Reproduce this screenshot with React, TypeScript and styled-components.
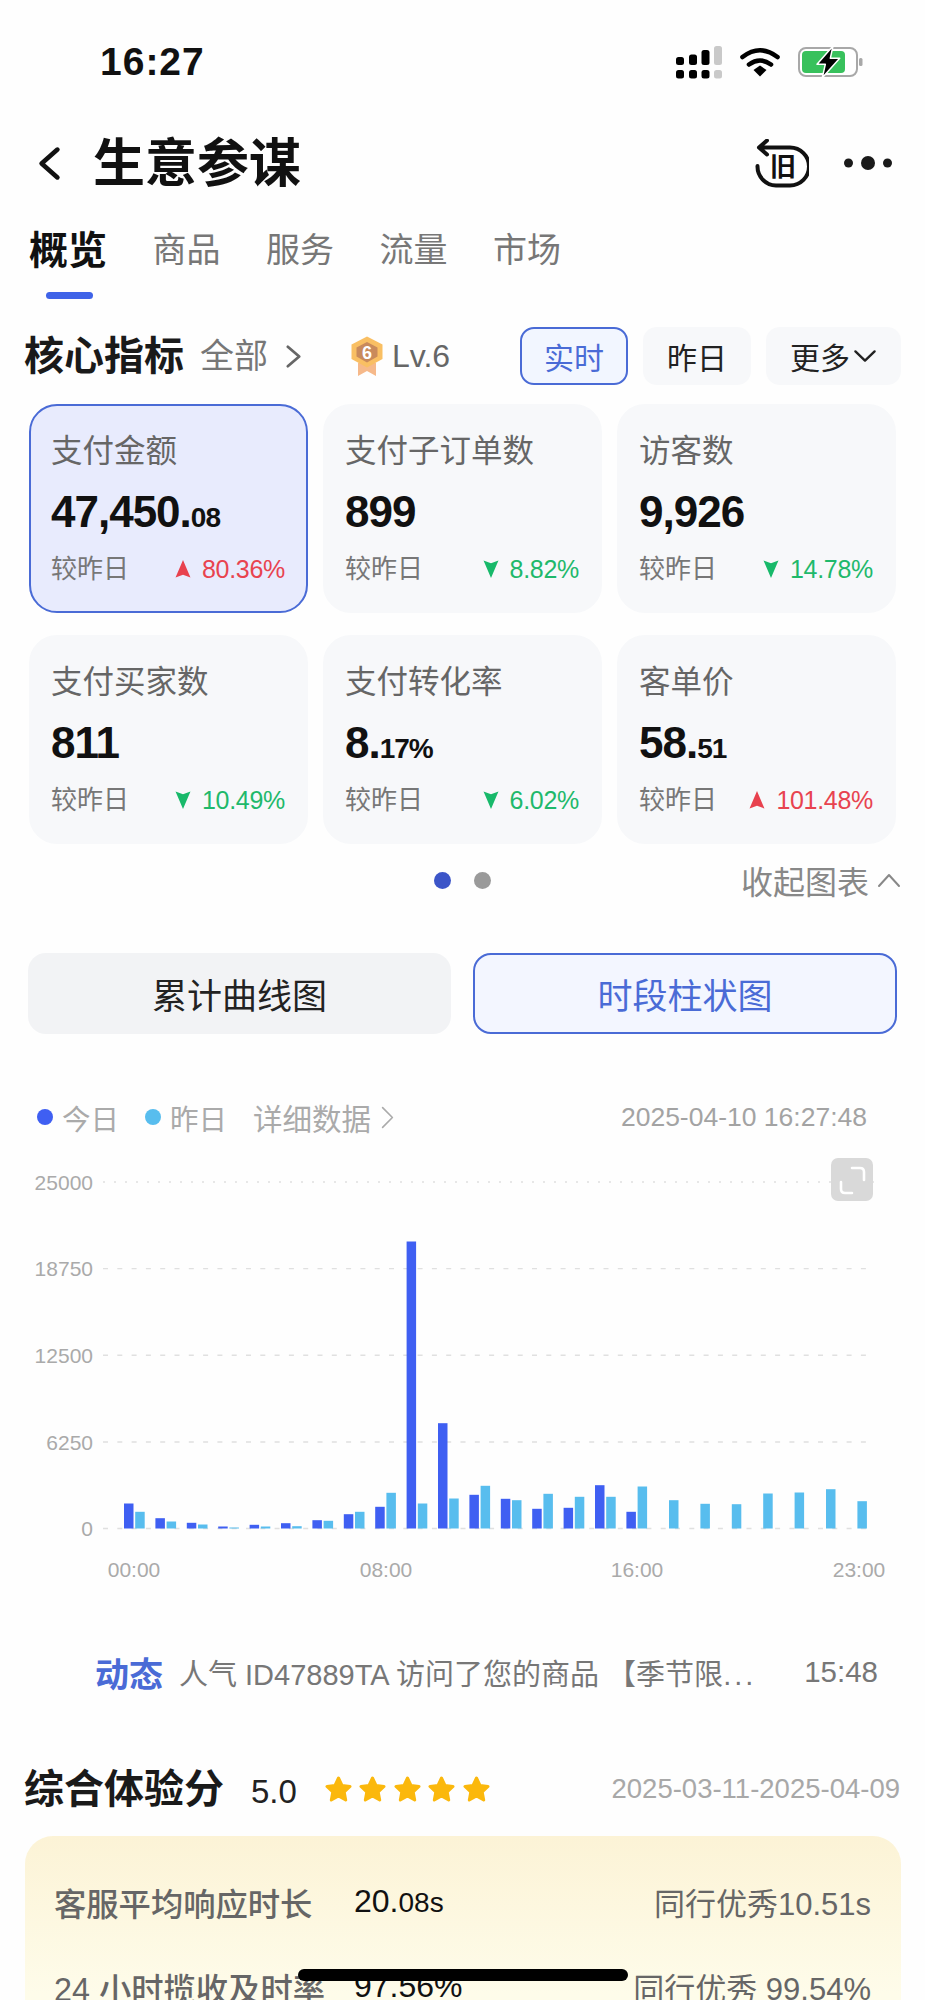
import styled, { createGlobalStyle } from 'styled-components';

const BLUE = '#3f5ff2';
const SKY = '#58bdee';

const metrics = [
	{ title: '支付金额', main: '47,450.', small: '08', trend: 'up', rate: '80.36%', active: true },
	{ title: '支付子订单数', main: '899', small: '', trend: 'down', rate: '8.82%' },
	{ title: '访客数', main: '9,926', small: '', trend: 'down', rate: '14.78%' },
	{ title: '支付买家数', main: '811', small: '', trend: 'down', rate: '10.49%' },
	{ title: '支付转化率', main: '8.', small: '17%', trend: 'down', rate: '6.02%' },
	{ title: '客单价', main: '58.', small: '51', trend: 'up', rate: '101.48%' },
];

const today = [25, 10.3, 5.7, 2, 3.7, 5.3, 8.3, 14.3, 21.7, 287, 105.3, 33.7, 29.7, 19.7, 20.7, 43.3, 16.7];
const yesterday = [
	16.7, 7, 4, 1, 2, 2.3, 7.7, 16.7, 35.7, 25, 30, 42.7, 28.3, 34.7, 31.7, 31.7, 42, 28.3, 24.7, 24.3, 35, 36,
	39.3, 27.3,
];
const gridLines = [
	{ y: 43, label: '25000', dash: '2 9' },
	{ y: 129.6, label: '18750', dash: '5 9.3' },
	{ y: 216.3, label: '12500', dash: '5 9.3' },
	{ y: 303, label: '6250', dash: '5 9.3' },
	{ y: 389.5, label: '0', dash: '5 9.3' },
];
const hours = [
	{ x: 134, label: '00:00' },
	{ x: 386, label: '08:00' },
	{ x: 637, label: '16:00' },
	{ x: 859, label: '23:00' },
];

function Triangle({ trend }: { trend: string }) {
	const color = trend === 'up' ? '#e8414e' : '#18b96a';
	return (
		<TrendIcon viewBox="0 0 15 18" width={16} height={20}>
			{trend === 'up' ? (
				<path d="M7.5 0.5 L14.5 17 L7.5 14.5 L0.5 17 Z" fill={color} />
			) : (
				<path d="M0.5 1 L7.5 3.5 L14.5 1 L7.5 17.5 Z" fill={color} />
			)}
		</TrendIcon>
	);
}

function Chevron({ w, h, sw, color, dir }: { w: number; h: number; sw: number; color: string; dir: string }) {
	const points = {
		left: `${w - sw} ${sw} ${sw} ${h / 2} ${w - sw} ${h - sw}`,
		right: `${sw} ${sw} ${w - sw} ${h / 2} ${sw} ${h - sw}`,
		down: `${sw} ${sw} ${w / 2} ${h - sw} ${w - sw} ${sw}`,
		up: `${sw} ${h - sw} ${w / 2} ${sw} ${w - sw} ${h - sw}`,
	}[dir];
	return (
		<svg width={w} height={h} viewBox={`0 0 ${w} ${h}`}>
			<polyline points={points} fill="none" stroke={color} strokeWidth={sw} strokeLinecap="round" strokeLinejoin="round" />
		</svg>
	);
}

function Star() {
	return (
		<svg width={29} height={28} viewBox="0 0 29 28">
			<path
				d="M14.5 3 L18 10.5 L26 11.5 L20.2 17 L21.7 25 L14.5 21 L7.3 25 L8.8 17 L3 11.5 L11 10.5 Z"
				fill="#fbb80c"
				stroke="#fbb80c"
				strokeWidth={3}
				strokeLinejoin="round"
			/>
		</svg>
	);
}

function Chart() {
	return (
		<ChartSvg viewBox="0 0 925 460" width={925} height={460}>
			{gridLines.map((g) => (
				<g key={g.label}>
					<line x1={103} x2={874} y1={g.y} y2={g.y} stroke="#e0e0e0" strokeWidth={1.4} strokeDasharray={g.dash} />
					<text x={93} y={g.y + 7.5} textAnchor="end" fontSize={21} fill="#aaaaaa">
						{g.label}
					</text>
				</g>
			))}
			{today.map((h, i) => (
				<rect key={i} x={124 + 31.4 * i} y={389.5 - h} width={9.5} height={h} fill={BLUE} />
			))}
			{yesterday.map((h, i) => (
				<rect key={i} x={135.2 + 31.4 * i} y={389.5 - h} width={9.5} height={h} fill={SKY} />
			))}
			{hours.map((t) => (
				<text key={t.label} x={t.x} y={438} textAnchor="middle" fontSize={21} fill="#aaaaaa">
					{t.label}
				</text>
			))}
			<rect x={831} y={19} width={42} height={43} rx={7} fill="#d9d9d9" />
			<path d="M852 29 H860 Q864 29 864 33 V41 M841 43 V50 Q841 54 845 54 H852" fill="none" stroke="#fff" strokeWidth={2.6} strokeLinecap="round" />
		</ChartSvg>
	);
}

export default function App() {
	return (
		<Frame>
			<GlobalStyle />
			<StatusBar>
				<Clock>16:27</Clock>
				<StatusIcons>
					<svg width={46} height={33} viewBox="0 0 46 33">
						<g fill="#000">
							<rect x={0} y={11} width={8} height={8} rx={2.5} />
							<rect x={13} y={8.5} width={8} height={10.5} rx={2.5} />
							<rect x={25.5} y={4} width={8} height={15} rx={2.5} />
							<rect x={0} y={24} width={8} height={8.5} rx={2.5} />
							<rect x={13} y={24} width={8} height={8.5} rx={2.5} />
							<rect x={25.5} y={24} width={8} height={8.5} rx={2.5} />
						</g>
						<rect x={38} y={0} width={8} height={19} rx={2.5} fill="#c9c9c9" />
						<rect x={38} y={24} width={8} height={8.5} rx={2.5} fill="#c9c9c9" />
					</svg>
					<svg width={40} height={30} viewBox="0 0 40 30">
						<path d="M2.5 10 Q20 -3.5 37.5 10" fill="none" stroke="#000" strokeWidth={4.6} strokeLinecap="round" />
						<path d="M9 17.5 Q20 9.5 31 17.5" fill="none" stroke="#000" strokeWidth={4.6} strokeLinecap="round" />
						<path d="M13.5 23 L20 18.5 L26.5 23 L20 29.5 Z" fill="#000" />
					</svg>
					<svg width={65} height={34} viewBox="0 -2 65 34">
						<rect x={1} y={1} width={58} height={28} rx={7} fill="#fff" stroke="#a8a8a8" strokeWidth={2} />
						<rect x={4} y={4} width={43} height={22} rx={4} fill="#38c15c" />
						<rect x={61} y={11} width={3.5} height={8} rx={1.5} fill="#a8a8a8" />
						<path d="M35 -1 L19 17.3 H27.3 L24.3 30.7 L41.7 11.3 H32.3 Z" fill="#000" stroke="#fff" strokeWidth={1.5} strokeLinejoin="round" />
					</svg>
				</StatusIcons>
			</StatusBar>

			<Header>
				<HeaderLeft>
					<Chevron w={25} h={37} sw={4.6} color="#111" dir="left" />
					<PageTitle>生意参谋</PageTitle>
				</HeaderLeft>
				<HeaderRight>
					<svg width={54} height={49} viewBox="0 0 54 49">
						<path d="M12 1.5 L4 8.5 L12 15.5 M4 8.5 H35 A 19 19 0 0 1 35 46.5 H21 A 19 19 0 0 1 2.5 27" fill="none" stroke="#111" strokeWidth={4} strokeLinecap="round" strokeLinejoin="round" />
						<text x={28} y={37} textAnchor="middle" fontSize={26} fontWeight={700} fill="#111">
							旧
						</text>
					</svg>
					<svg width={48} height={16} viewBox="0 0 48 16">
						<circle cx={4.5} cy={8} r={4.5} fill="#1a1a1a" />
						<circle cx={24} cy={8} r={7} fill="#1a1a1a" />
						<circle cx={43.5} cy={8} r={4.5} fill="#1a1a1a" />
					</svg>
				</HeaderRight>
			</Header>

			<Tabs>
				<Tab $active>概览</Tab>
				<Tab>商品</Tab>
				<Tab>服务</Tab>
				<Tab>流量</Tab>
				<Tab>市场</Tab>
			</Tabs>

			<CoreRow>
				<CoreLeft>
					<SectionTitle>核心指标</SectionTitle>
					<AllLink>全部</AllLink>
					<Chevron w={17} h={25} sw={2.8} color="#666" dir="right" />
					<Medal width={34} height={41} viewBox="0 0 34 41">
						<path d="M8 27 V40 L17 35 L26 40 V27 Z" fill="#f6b98a" />
						<path d="M17 0.5 L32.5 8.5 V23 L17 31.5 L1.5 23 V8.5 Z" fill="#f9bf63" />
						<path d="M17 6 L27.5 11.5 V20.5 L17 26.5 L6.5 20.5 V11.5 Z" fill="#c98a5b" />
						<text x={17} y={22.5} textAnchor="middle" fontSize={18} fontWeight={700} fill="#fff">
							6
						</text>
					</Medal>
					<Level>Lv.6</Level>
				</CoreLeft>
				<RangeGroup>
					<RangeButton $active $width={108}>实时</RangeButton>
					<RangeButton $width={108}>昨日</RangeButton>
					<RangeButton $width={135}>
						更多
						<Chevron w={24} h={14} sw={2.4} color="#222" dir="down" />
					</RangeButton>
				</RangeGroup>
			</CoreRow>

			<MetricGrid>
				{metrics.map((m) => (
					<MetricCard key={m.title} $active={m.active}>
						<MetricTitle>{m.title}</MetricTitle>
						<MetricValue>
							{m.main}
							<small>{m.small}</small>
						</MetricValue>
						<MetricFoot>
							<span>较昨日</span>
							<Rate $trend={m.trend}>
								<Triangle trend={m.trend} />
								{m.rate}
							</Rate>
						</MetricFoot>
					</MetricCard>
				))}
			</MetricGrid>

			<Pager>
				<span />
				<Dots>
					<Dot $color="#3c55c8" />
					<Dot $color="#9a9a9a" />
				</Dots>
				<Collapse>
					收起图表
					<Chevron w={24} h={15} sw={2} color="#888" dir="up" />
				</Collapse>
			</Pager>

			<ChartSwitch>
				<SwitchButton>累计曲线图</SwitchButton>
				<SwitchButton $active>时段柱状图</SwitchButton>
			</ChartSwitch>

			<Legend>
				<LegendLeft>
					<LegendItem $color={BLUE}>今日</LegendItem>
					<LegendItem $color={SKY}>昨日</LegendItem>
					<Detail>
						详细数据
						<Chevron w={13} h={23} sw={1.6} color="#aaa" dir="right" />
					</Detail>
				</LegendLeft>
				<Stamp>2025-04-10 16:27:48</Stamp>
			</Legend>

			<Chart />

			<Feed>
				<FeedTag>动态</FeedTag>
				<FeedText>
					人气 ID47889TA 访问了您的商品 【季节限<Ellipsis>...</Ellipsis>
				</FeedText>
				<FeedTime>15:48</FeedTime>
			</Feed>

			<ScoreRow>
				<ScoreLeft>
					<SectionTitle>综合体验分</SectionTitle>
					<Score>5.0</Score>
					<Stars>
						{[0, 1, 2, 3, 4].map((i) => (
							<Star key={i} />
						))}
					</Stars>
				</ScoreLeft>
				<ScoreDate>2025-03-11-2025-04-09</ScoreDate>
			</ScoreRow>

			<ScoreCard>
				<ScoreItem>
					<ItemLabel>客服平均响应时长</ItemLabel>
					<ItemValue>
						20.<small>08s</small>
					</ItemValue>
					<ItemPeer>同行优秀10.51s</ItemPeer>
				</ScoreItem>
				<ScoreItem>
					<ItemLabel>24 小时揽收及时率</ItemLabel>
					<ItemValue>97.56%</ItemValue>
					<ItemPeer>同行优秀 99.54%</ItemPeer>
				</ScoreItem>
			</ScoreCard>

			<HomeBar />
		</Frame>
	);
}

const GlobalStyle = createGlobalStyle`
	html, body {
		margin: 0;
		padding: 0;
		background: #fefefe;
	}
	* {
		box-sizing: border-box;
	}
	body, svg text {
		font-family: 'Liberation Sans', 'Noto Sans CJK SC', sans-serif;
	}
`;

const Frame = styled.div`
	position: relative;
	width: 925px;
	height: 2000px;
	overflow: hidden;
	background: #fefefe;
	color: #111;
`;

const StatusBar = styled.div`
	display: flex;
	align-items: center;
	justify-content: space-between;
	height: 124px;
	padding: 0 62px 0 100px;
`;

const Clock = styled.div`
	font-size: 39px;
	font-weight: 700;
	letter-spacing: 1px;
`;

const StatusIcons = styled.div`
	display: flex;
	align-items: center;
	gap: 18px;
`;

const Header = styled.div`
	display: flex;
	align-items: center;
	justify-content: space-between;
	height: 78px;
	padding: 0 33px 0 37px;
`;

const HeaderLeft = styled.div`
	display: flex;
	align-items: center;
	gap: 31px;
`;

const PageTitle = styled.div`
	font-size: 52px;
	font-weight: 700;
	line-height: 1;
	margin-top: 2px;
`;

const HeaderRight = styled.div`
	display: flex;
	align-items: center;
	gap: 35px;
`;

const Tabs = styled.div`
	display: flex;
	align-items: center;
	gap: 45.5px;
	height: 96px;
	padding: 0 0 0 29px;
`;

const Tab = styled.div<{ $active?: boolean }>`
	position: relative;
	font-size: ${(p) => (p.$active ? '39px' : '34px')};
	font-weight: ${(p) => (p.$active ? 700 : 400)};
	color: ${(p) => (p.$active ? '#111' : '#777')};
	line-height: 1;

	&::after {
		content: '';
		display: ${(p) => (p.$active ? 'block' : 'none')};
		position: absolute;
		left: 17px;
		right: 14px;
		bottom: -29px;
		height: 7px;
		border-radius: 4px;
		background: #3f63e8;
	}
`;

const CoreRow = styled.div`
	display: flex;
	align-items: center;
	justify-content: space-between;
	margin-top: 29px;
	padding: 0 24px 0 24px;
`;

const CoreLeft = styled.div`
	display: flex;
	align-items: center;
`;

const SectionTitle = styled.div`
	font-size: 40px;
	font-weight: 700;
	line-height: 1;
	color: #1a1a1a;
`;

const AllLink = styled.span`
	font-size: 34px;
	color: #777;
	margin: 0 17px 0 16px;
	line-height: 1;
`;

const Medal = styled.svg`
	margin-left: 48px;
`;

const Level = styled.span`
	font-size: 32px;
	color: #666;
	margin-left: 8px;
`;

const RangeGroup = styled.div`
	display: flex;
	gap: 15px;
`;

const RangeButton = styled.div<{ $active?: boolean; $width: number }>`
	display: flex;
	align-items: center;
	justify-content: center;
	gap: 3px;
	width: ${(p) => p.$width}px;
	height: 58px;
	border-radius: 14px;
	font-size: 30px;
	color: ${(p) => (p.$active ? '#4a6bd6' : '#222')};
	background: ${(p) => (p.$active ? '#f2f6ff' : '#f7f8fa')};
	border: ${(p) => (p.$active ? '2px solid #4a6bd6' : 'none')};
`;

const MetricGrid = styled.div`
	display: grid;
	grid-template-columns: repeat(3, 279px);
	grid-auto-rows: 209px;
	gap: 22px 15px;
	margin-top: 19px;
	padding: 0 29px;
`;

const MetricCard = styled.div<{ $active?: boolean }>`
	display: flex;
	flex-direction: column;
	padding: 25px 21px 0 20px;
	border-radius: 28px;
	background: ${(p) => (p.$active ? '#e8ebfd' : '#f7f8fa')};
	border: 2px solid ${(p) => (p.$active ? '#4a6bd6' : '#f7f8fa')};
`;

const MetricTitle = styled.div`
	font-size: 31.5px;
	line-height: 40px;
	color: #666;
	white-space: nowrap;
`;

const MetricValue = styled.div`
	margin-top: 18px;
	font-size: 44px;
	font-weight: 700;
	line-height: 46px;
	letter-spacing: -1px;
	color: #111;

	small {
		font-size: 28px;
		font-weight: 700;
	}
`;

const MetricFoot = styled.div`
	display: flex;
	align-items: center;
	justify-content: space-between;
	margin-top: 11px;
	font-size: 26px;
	line-height: 34px;
	color: #777;
`;

const TrendIcon = styled.svg`
	margin-right: 11px;
`;

const Rate = styled.span<{ $trend: string }>`
	display: flex;
	align-items: center;
	font-size: 25px;
	letter-spacing: -0.3px;
	color: ${(p) => (p.$trend === 'up' ? '#e8434f' : '#1fb96b')};
`;

const Pager = styled.div`
	display: grid;
	grid-template-columns: 1fr auto 1fr;
	align-items: center;
	height: 72px;
`;

const Dots = styled.div`
	display: flex;
	gap: 23px;
`;

const Dot = styled.span<{ $color: string }>`
	width: 17px;
	height: 17px;
	border-radius: 50%;
	background: ${(p) => p.$color};
`;

const Collapse = styled.div`
	display: flex;
	align-items: center;
	justify-content: flex-end;
	gap: 8px;
	padding-right: 24px;
	font-size: 32px;
	color: #888;
`;

const ChartSwitch = styled.div`
	display: grid;
	grid-template-columns: 423px 424px;
	gap: 22px;
	margin-top: 37px;
	padding: 0 28px;
`;

const SwitchButton = styled.div<{ $active?: boolean }>`
	display: flex;
	align-items: center;
	justify-content: center;
	height: 81px;
	border-radius: 18px;
	font-size: 35px;
	color: ${(p) => (p.$active ? '#4a6bd6' : '#222')};
	background: ${(p) => (p.$active ? '#f3f6ff' : '#f2f3f5')};
	border: ${(p) => (p.$active ? '2px solid #4a6bd6' : 'none')};
`;

const Legend = styled.div`
	display: flex;
	align-items: center;
	justify-content: space-between;
	height: 40px;
	margin: 63px 0 2px;
	padding: 0 58px 0 37px;
`;

const LegendLeft = styled.div`
	display: flex;
	align-items: center;
	gap: 26px;
`;

const LegendItem = styled.span<{ $color: string }>`
	display: flex;
	align-items: center;
	gap: 9px;
	font-size: 28.5px;
	color: #aaa;

	&::before {
		content: '';
		width: 16px;
		height: 16px;
		border-radius: 50%;
		background: ${(p) => p.$color};
	}
`;

const Detail = styled.span`
	display: flex;
	align-items: center;
	gap: 10px;
	font-size: 29.5px;
	color: #aaa;
`;

const Stamp = styled.span`
	font-size: 26.5px;
	color: #a3a3a3;
`;

const ChartSvg = styled.svg`
	display: block;
`;

const Feed = styled.div`
	display: flex;
	align-items: center;
	height: 60px;
	margin-top: 43px;
	padding: 0 47px 0 95px;
`;

const FeedTag = styled.span`
	font-size: 34px;
	font-weight: 700;
	color: #4a6bd6;
`;

const FeedText = styled.span`
	flex: 1;
	margin-left: 16px;
	font-size: 29px;
	color: #777;
	white-space: nowrap;
`;

const Ellipsis = styled.span`
	letter-spacing: 3px;
`;

const FeedTime = styled.span`
	font-size: 29.5px;
	color: #777;
`;

const ScoreRow = styled.div`
	display: flex;
	align-items: center;
	justify-content: space-between;
	height: 50px;
	margin-top: 62px;
	padding: 0 25px 0 24px;
`;

const ScoreLeft = styled.div`
	display: flex;
	align-items: center;
`;

const Score = styled.span`
	margin-left: 27px;
	padding-top: 6px;
	font-size: 33px;
	color: #222;
`;

const Stars = styled.div`
	display: flex;
	gap: 5.5px;
	margin-left: 27px;
`;

const ScoreDate = styled.span`
	font-size: 27.5px;
	color: #a8a8a8;
`;

const ScoreCard = styled.div`
	margin: 22px 24px 0 25px;
	padding: 23px 30px 0 29px;
	height: 220px;
	border-radius: 28px;
	background: linear-gradient(180deg, #fcf3d6 0%, #fefcea 72%);
`;

const ScoreItem = styled.div`
	display: flex;
	align-items: center;
	height: 85px;
`;

const ItemLabel = styled.span`
	width: 300px;
	font-size: 32.3px;
	font-weight: 500;
	color: #666;
	white-space: nowrap;
`;

const ItemValue = styled.span`
	flex: 1;
	font-size: 32px;
	color: #111;

	small {
		font-size: 28px;
	}
`;

const ItemPeer = styled.span`
	font-size: 31px;
	color: #666;
	white-space: nowrap;
`;

const HomeBar = styled.div`
	position: absolute;
	left: 298px;
	top: 1969px;
	width: 330px;
	height: 12px;
	border-radius: 6px;
	background: #000;
`;
